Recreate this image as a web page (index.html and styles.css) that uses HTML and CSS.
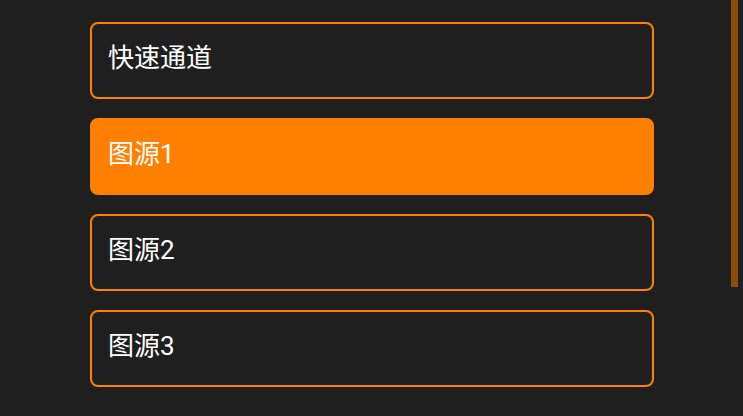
FILE: index.html
```html
<!DOCTYPE html>
<html lang="zh">
<head>
<meta charset="utf-8">
<title>图源</title>
<link rel="stylesheet" href="styles.css">
</head>
<body>
<div class="page">
  <ul class="list">
    <li class="item">快速通道</li>
    <li class="item active">图源1</li>
    <li class="item">图源2</li>
    <li class="item">图源3</li>
  </ul>
  <div class="scrollbar"></div>
</div>
</body>
</html>
```
FILE: styles.css
```css
html, body {
  margin: 0;
  padding: 0;
  background: #1f1f1f;
}
.page {
  position: relative;
  width: 743px;
  height: 416px;
  overflow: hidden;
  font-family: Roboto, "Noto Sans CJK SC", sans-serif;
}
.list {
  list-style: none;
  margin: 0;
  padding: 22px 0 0 90px;
  display: flex;
  flex-direction: column;
  gap: 19px;
}
.item {
  box-sizing: border-box;
  width: 564px;
  height: 77px;
  border: 2px solid #ff8000;
  border-radius: 8px;
  padding: 0 16px 5px 16px;
  display: flex;
  align-items: center;
  color: #ffffff;
  font-size: 26px;
  line-height: 36px;
}
.item.active {
  background: #ff8000;
}
.scrollbar {
  position: absolute;
  left: 731px;
  top: 0;
  width: 7px;
  height: 287px;
  background: #8b4d08;
}
```
